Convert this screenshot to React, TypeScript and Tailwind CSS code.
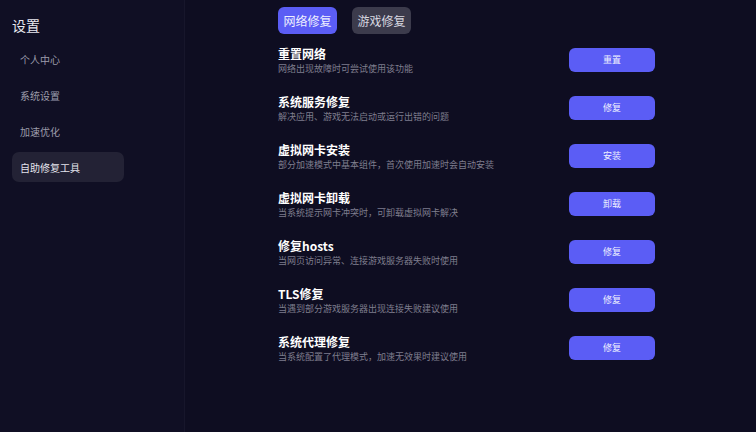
import * as React from 'react';
import { useState } from 'react';

const menu = ['个人中心', '系统设置', '加速优化', '自助修复工具'];

const repairs = [
  { title: '重置网络', desc: '网络出现故障时可尝试使用该功能', action: '重置' },
  { title: '系统服务修复', desc: '解决应用、游戏无法启动或运行出错的问题', action: '修复' },
  { title: '虚拟网卡安装', desc: '部分加速模式中基本组件，首次使用加速时会自动安装', action: '安装' },
  { title: '虚拟网卡卸载', desc: '当系统提示网卡冲突时，可卸载虚拟网卡解决', action: '卸载' },
  { title: '修复hosts', desc: '当网页访问异常、连接游戏服务器失败时使用', action: '修复' },
  { title: 'TLS修复', desc: '当遇到部分游戏服务器出现连接失败建议使用', action: '修复' },
  { title: '系统代理修复', desc: '当系统配置了代理模式，加速无效果时建议使用', action: '修复' },
];

export default function App() {
  const [active, setActive] = useState(3);
  const [tab, setTab] = useState(0);

  return (
    <div
      className="flex w-[756px] h-[432px] bg-[#0e0d21] text-white overflow-hidden"
      style={{ fontFamily: '"Noto Sans CJK SC", "Noto Sans", sans-serif' }}
    >
      {/* Sidebar */}
      <aside className="w-[185px] shrink-0 bg-[#100f24] border-r border-[#17162b] px-3 pt-[15px]">
        <div className="h-5 flex items-center text-[14px] text-[#e8e8ef]">设置</div>
        <div className="mt-[9px] flex flex-col gap-[6px]">
          {menu.map((m, i) => (
            <button
              key={m}
              onClick={() => setActive(i)}
              className={`w-[112px] h-[30px] rounded-[7px] pl-2 text-left text-[10px] ${
                active === i ? 'bg-[#232235] text-[#e4e4ec]' : 'text-[#9c9cab]'
              }`}
            >
              {m}
            </button>
          ))}
        </div>
      </aside>

      {/* Main */}
      <main className="flex-1 pl-[93px] pt-[7px]">
        <div className="flex gap-[15px]">
          {['网络修复', '游戏修复'].map((t, i) => (
            <button
              key={t}
              onClick={() => setTab(i)}
              className={`w-[59px] h-[27px] rounded-[6px] text-[12px] ${
                tab === i ? 'bg-[#5b5df5] text-[#eef0ff]' : 'bg-[#3c3b4c] text-[#d8d8e0]'
              }`}
            >
              {t}
            </button>
          ))}
        </div>

        <div className="mt-[2px] w-[377px] flex flex-col">
          {repairs.map((r) => (
            <div key={r.title} className="h-[48px] flex items-center justify-between">
              <div className="flex flex-col">
                <div className="text-[12px] leading-[16px] font-bold text-white">{r.title}</div>
                <div className="text-[9px] leading-[13px] text-[#7f7e8e]">{r.desc}</div>
              </div>
              <button className="w-[86px] h-[24px] rounded-[6px] bg-[#5b5df5] text-[9px] text-[#eef0ff]">
                {r.action}
              </button>
            </div>
          ))}
        </div>
      </main>
    </div>
  );
}
